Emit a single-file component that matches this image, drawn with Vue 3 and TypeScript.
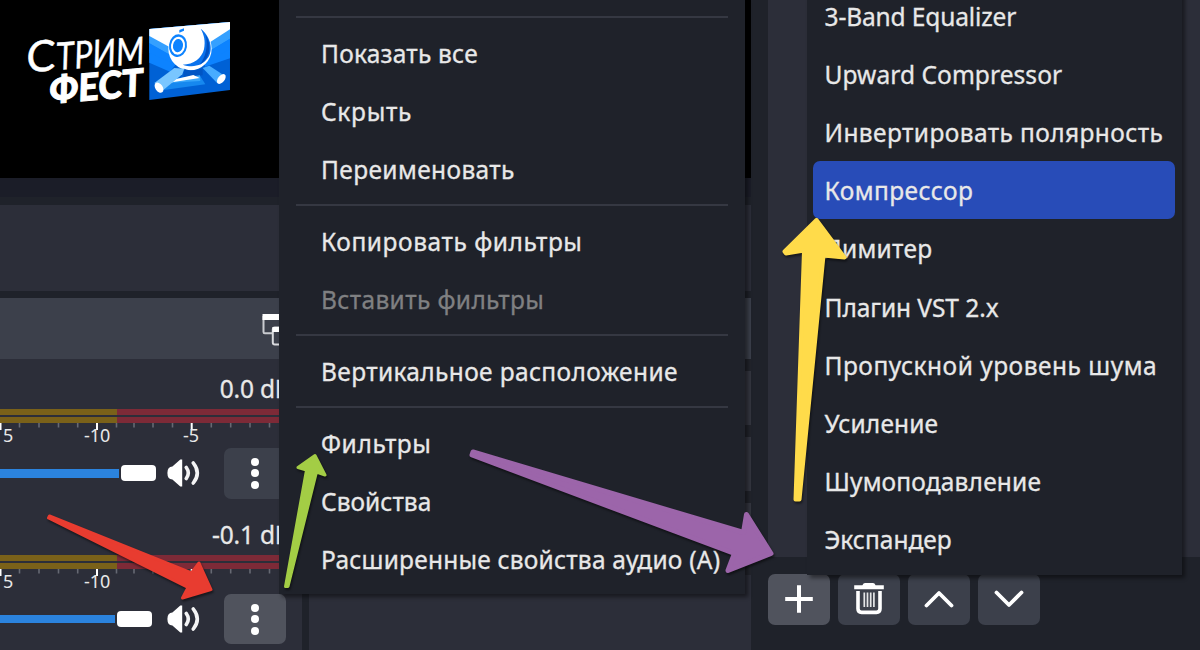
<script setup lang="ts">
interface Entry {
  label: string
  spacing?: number
  disabled?: boolean
  active?: boolean
}

interface Channel {
  level: string
  value: number
  hot: boolean
}

const contextGroups: Entry[][] = [
  [
    { label: 'Показать все', spacing: 0.22 },
    { label: 'Скрыть', spacing: 0.7 },
    { label: 'Переименовать', spacing: 0.38 },
  ],
  [
    { label: 'Копировать фильтры', spacing: 0.55 },
    { label: 'Вставить фильтры', spacing: 0.36, disabled: true },
  ],
  [{ label: 'Вертикальное расположение', spacing: 0.36 }],
  [
    { label: 'Фильтры', spacing: 0.6 },
    { label: 'Свойства', spacing: 0.02 },
    { label: 'Расширенные свойства аудио (A)', spacing: 0.21 },
  ],
]

const filters: Entry[] = [
  { label: '3-Band Equalizer', spacing: -0.13 },
  { label: 'Upward Compressor', spacing: 0.06 },
  { label: 'Инвертировать полярность', spacing: 0.4 },
  { label: 'Компрессор', spacing: 0.42, active: true },
  { label: 'Лимитер', spacing: 0.3 },
  { label: 'Плагин VST 2.x', spacing: -0.07 },
  { label: 'Пропускной уровень шума', spacing: 0.5 },
  { label: 'Усиление', spacing: 0.15 },
  { label: 'Шумоподавление', spacing: 0.16 },
  { label: 'Экспандер' },
]

const channels: Channel[] = [
  { level: '0.0 dB', value: 119, hot: false },
  { level: '-0.1 dB', value: 115, hot: true },
]

const minorTicks = [19.5, 39, 58.5, 77.7, 116.5, 134, 153, 172.5, 211.3, 230.7, 250, 269.5]
const majorTicks = [0.5, 97, 191.7]
</script>

<template>
  <div class="screen">
    <section class="main-window">
      <div class="preview">
        <svg class="logo" viewBox="0 0 240 120" width="240" height="120">
          <g fill="#fff" stroke="#fff" font-family="Lato, 'Open Sans', sans-serif">
            <g transform="matrix(1 -0.07 -0.03 1 28 73)" stroke-width=".5">
              <text x="-2" y="-1" font-size="43" textLength="29" lengthAdjust="spacingAndGlyphs">С</text>
              <text x="28" y="-1" font-size="38" textLength="88" lengthAdjust="spacingAndGlyphs">ТРИМ</text>
            </g>
            <g transform="matrix(1 -0.09 -0.03 1 50 104)" stroke-width="1">
              <text x="-1" y="0" font-size="38" font-weight="900" textLength="94" lengthAdjust="spacingAndGlyphs">ФЕСТ</text>
            </g>
          </g>
          <g transform="translate(140 10) scale(.3333)">
            <path d="M28 57 270 36V240L28 270Z" fill="#0061d5" />
            <path d="M28 57 270 36V96L180 140H110L28 125Z" fill="#0d83ff" />
            <path d="M28 125 110 160 90 185 28 158ZM270 96V145L195 170 190 140Z" fill="#0d83ff" />
            <path d="M28 57 270 36V86L200 128 100 140 28 100Z" fill="#35a0ff" />
            <path d="M28 100 100 140 110 165 28 128ZM270 86V118L190 160 200 128Z" fill="#0d83ff" />
            <path d="M28 57 270 36V58L205 100 90 112 28 78Z" fill="#fff" />
            <circle cx="150" cy="116" r="65" fill="#fff" />
            <path d="M182 56C208 76 222 114 205 142 188 168 158 174 128 164 162 164 185 144 192 118 197 92 192 74 182 56Z" fill="#0a72ed" />
            <path d="M197 74C216 106 212 145 178 165 197 143 205 108 197 74Z" fill="#0050c0" />
            <ellipse cx="114" cy="107" rx="27" ry="34" transform="rotate(8 114 107)" fill="#0d83ff" />
            <ellipse cx="114" cy="107" rx="21" ry="27" transform="rotate(8 114 107)" fill="#fff" />
            <ellipse cx="114" cy="107" rx="15" ry="20" transform="rotate(8 114 107)" fill="#0d83ff" />
            <path d="M118 60 132 55V62L118 68Z" fill="#0d83ff" />
            <path d="M133 176C150 184 170 183 188 174V196L130 202Z" fill="#0055c4" />
            <path d="M84 211 180 197 196 223 72 240Z" fill="#1688ef" />
            <path d="M80 219 98 207 180 196 181 213Z" fill="#38a5fa" />
            <path d="M81 219 100 209 160 195 179 204Z" fill="#fff" />
            <path d="M43 219 103 174 133 176 127 193 70 240Z" fill="#79c6ff" />
            <path d="M188 174 208 167 256 199 232 220Z" fill="#48acff" />
            <ellipse cx="57" cy="233" rx="11" ry="17" transform="rotate(-35 57 233)" fill="#fff" />
            <ellipse cx="244" cy="207" rx="10" ry="17" transform="rotate(38 244 207)" fill="#fff" />
          </g>
        </svg>
      </div>
      <div class="preview-edge"></div>
      <div class="source-bar"></div>
      <div class="docks">
        <div class="mixer">
          <div class="mixer-head">
            <svg class="dock-icon" width="24" height="32" viewBox="0 0 24 32">
              <path d="M1.5 2v16q0 1.3 1.3 1.3H21V2" fill="none" stroke="#c9cbd0" stroke-width="2" />
              <path d="M.5 0H24v6H.5z" fill="#fff" />
              <rect x="10.8" y="13.5" width="16" height="17" rx="2" fill="#3c404b" stroke="#d9dade" stroke-width="2" />
              <path d="M10.5 13h14v5h-14z" fill="#fff" />
            </svg>
          </div>
          <div v-for="channel in channels" :key="channel.level" class="channel">
            <div class="level">{{ channel.level }}</div>
            <div class="meter"><i></i><i></i></div>
            <svg class="scale" width="302" height="25" viewBox="0 0 302 25">
              <path v-for="x in minorTicks" :key="x" :d="`M${x} 0v4.5`" stroke="#666973" stroke-width="1.6" />
              <path v-for="x in majorTicks" :key="x" :d="`M${x} 0v7`" stroke="#fff" stroke-width="2" />
              <text x="-13" y="18.7">-15</text>
              <text x="84" y="18.7">-10</text>
              <text x="183" y="18.7">-5</text>
            </svg>
            <div class="controls">
              <div class="track" :style="{ width: channel.value + 'px' }"></div>
              <div class="handle"></div>
              <svg class="speaker" :style="{ marginLeft: 130 - channel.value + 'px' }" width="34" height="30" viewBox="0 0 34 30">
                <path d="M.4 15q0-6.5 5-6.5L13.3 1.5h1.9v27h-1.9L5.4 21.5Q.4 21.5 .4 15Z" fill="#fff" />
                <path d="M19.3 9.5q4 5.500 0 11M26.300 5q8 10 0 20" fill="none" stroke="#f4f4f5" stroke-width="3.6" stroke-linecap="round" />
              </svg>
              <div class="more" :class="{ hot: channel.hot }"><b></b><b></b><b></b></div>
            </div>
          </div>
        </div>
        <div class="side-dock">
          <div class="side-head"></div>
          <div class="side-row"></div>
          <div class="side-row"></div>
          <div class="side-row tall"></div>
        </div>
      </div>
    </section>

    <section class="filter-window">
      <div class="filter-list"></div>
      <div class="toolbar">
        <div class="tool hot">
          <svg width="30" height="30" viewBox="0 0 30 30"><path d="M15 1.2v27.6M1.2 15h27.6" stroke="#fff" stroke-width="4" /></svg>
        </div>
        <div class="tool">
          <svg width="32" height="34" viewBox="0 0 32 34">
            <path d="M1.2 3.2h8.2q1-2.2 2.6-2.2h8q1.6 0 2.6 2.2h8.2v4H1.2Z" fill="#fff" />
            <path d="M5 9v17.8q0 3.6 3.6 3.6h14.8q3.6 0 3.6-3.600V9" fill="none" stroke="#fff" stroke-width="3.6" />
            <path d="M11.3 10.5v14.5M14.5 10.5v14.5M17.7 10.5v14.5M20.9 10.5v14.5" stroke="#e4e5e7" stroke-width="1.7" />
          </svg>
        </div>
        <div class="tool">
          <svg width="30" height="20" viewBox="0 0 30 20"><path d="M2.5 16.500 15 4l12.500 12.500" fill="none" stroke="#fff" stroke-width="3.8" stroke-linecap="round" stroke-linejoin="round" /></svg>
        </div>
        <div class="tool">
          <svg width="30" height="20" viewBox="0 0 30 20"><path d="M2.5 3.500 15 16 27.500 3.500" fill="none" stroke="#fff" stroke-width="3.8" stroke-linecap="round" stroke-linejoin="round" /></svg>
        </div>
      </div>
    </section>

    <nav class="menu context-menu">
      <div v-for="(group, index) in contextGroups" :key="index" class="group">
        <div v-for="entry in group" :key="entry.label" class="entry" :class="{ disabled: entry.disabled }">
          <span :style="{ letterSpacing: (entry.spacing ?? 0) + 'px' }">{{ entry.label }}</span>
        </div>
      </div>
    </nav>

    <nav class="menu filter-menu">
      <div v-for="entry in filters" :key="entry.label" class="entry" :class="{ active: entry.active }">
        <span :style="{ letterSpacing: (entry.spacing ?? 0) + 'px' }">{{ entry.label }}</span>
      </div>
    </nav>

    <svg class="arrows" width="1200" height="650" viewBox="0 0 1200 650">
      <path fill="#e83c30" stroke="#e83c30" d="M49.5 516 191.5 573 199 563 211 589.5 182.5 598 188 587.5 48.5 518Z" />
      <path fill="#a3cd45" stroke="#a3cd45" d="M285.5 586.5 306.5 470 298 467.5 315 455.5 325 475 316.5 472 288 586.500Z" />
      <path fill="#9c65aa" stroke="#9c65aa" stroke-width="5" d="M473 452 743.500 532.500 746.500 514.500 771 553.500 728 570.500 734.500 553.500 472 455Z" />
      <path fill="#ffdb4a" stroke="#ffdb4a" stroke-width="4" d="M795.5 499.5 804 250.500 786 253.500 784.500 251.500 816.500 220 844.500 257.500 823.500 255.500 799.500 499.500Z" />
    </svg>
  </div>
</template>

<style>
body {
  margin: 0;
  overflow: hidden;
  background: #1f222a;
}
</style>

<style scoped>
.screen {
  position: relative;
  display: grid;
  grid-template-columns: 751px 449px;
  width: 1200px;
  height: 650px;
  overflow: hidden;
  background: #1f222a;
  color: #e8e8e8;
  font-family: 'Noto Sans', 'Open Sans', sans-serif;
  font-size: 24.5px;
  -webkit-text-stroke: 0.3px currentColor;
}

.main-window {
  display: flex;
  flex-direction: column;
  height: 650px;
  overflow: hidden;
}

.preview {
  flex: none;
  height: 178px;
  background: #000;
}

.logo {
  display: block;
}

.preview-edge {
  flex: none;
  height: 19px;
  background: #1b1d28;
}

.source-bar {
  flex: none;
  height: 86px;
  margin: 8px 0 7px;
  background: #2c2e39;
}

.docks {
  display: flex;
  flex: 1;
  gap: 7px;
  min-height: 0;
}

.mixer {
  flex: none;
  width: 302px;
  overflow: hidden;
  background: #2c2e39;
}

.mixer-head {
  box-sizing: border-box;
  height: 61px;
  padding: 16px 0 0 262px;
  background: #3c404b;
}

.dock-icon {
  display: block;
}

.channel {
  box-sizing: border-box;
  height: 145.8px;
  padding-top: 9px;
}

.level {
  height: 41.3px;
  padding-right: 11.5px;
  line-height: 41.3px;
  letter-spacing: -0.2px;
  text-align: right;
}

.meter {
  display: grid;
  gap: 2px;
}

.meter i {
  height: 6px;
  background: linear-gradient(90deg, #7a6119 117.5px, #7d2a37 117.5px);
}

.scale {
  display: block;
  font-size: 18px;
  fill: #e8e8e8;
}

.controls {
  display: flex;
  align-items: center;
  height: 50px;
}

.track {
  height: 8.5px;
  background: #2b83de;
}

.handle {
  width: 35px;
  height: 16px;
  margin-left: 2px;
  border-radius: 4px;
  background: #fff;
}

.speaker {
  flex: none;
}

.more {
  display: flex;
  flex: none;
  flex-direction: column;
  align-items: center;
  justify-content: center;
  gap: 3.6px;
  width: 62px;
  height: 50.5px;
  margin-left: 23px;
  border-radius: 7px;
  background: #3c404b;
}

.more.hot {
  background: #50535d;
}

.more b {
  width: 8px;
  height: 8px;
  border-radius: 50%;
  background: #fff;
}

.side-dock {
  display: flex;
  flex: 1;
  flex-direction: column;
  gap: 12px;
  background: #22242c;
}

.side-head {
  height: 61px;
  background: #3c404b;
}

.side-row {
  height: 54px;
  background: #343640;
}

.side-row.tall {
  flex: 1;
  background: linear-gradient(#343640 60px, #22242c 60px, #22242c 72px, #2c2e39 72px);
}

.filter-window {
  display: flex;
  flex-direction: column;
  padding-left: 17px;
}

.filter-list {
  height: 556.5px;
  background: #2c2e39;
}

.toolbar {
  display: flex;
  gap: 8px;
  padding-top: 17.5px;
}

.tool {
  display: flex;
  align-items: center;
  justify-content: center;
  width: 62px;
  height: 50.5px;
  border-radius: 7px;
  background: #3c404b;
}

.tool.hot {
  background: #50535d;
}

.menu {
  position: absolute;
  box-sizing: border-box;
  background: #1f222a;
  box-shadow: 3px 3px 4px rgba(0, 0, 0, 0.45);
}

.context-menu {
  top: 0;
  left: 278.6px;
  width: 466.4px;
  height: 593.5px;
  padding: 15.5px 17px 0;
}

.group {
  padding-bottom: 5px;
}

.group::before {
  display: block;
  height: 2px;
  margin-bottom: 7px;
  background: #353842;
  content: '';
}

.entry {
  height: 58.2px;
  line-height: 58.2px;
  white-space: nowrap;
}

.context-menu .entry {
  height: 58px;
  padding-left: 25.4px;
}

.entry.disabled {
  color: #7f8082;
}

.filter-menu {
  top: -13.4px;
  left: 807px;
  width: 375px;
  height: 588px;
  padding: 0 7px 0 6px;
}

.filter-menu .entry {
  padding-left: 11.5px;
  line-height: 59.6px;
}

.entry.active {
  border-radius: 7px;
  background: #284cb8;
}

.arrows {
  position: absolute;
  inset: 0;
  filter: drop-shadow(1px 2px 1px rgba(0, 0, 0, 0.5));
  stroke-linejoin: round;
  stroke-width: 3;
}
</style>
